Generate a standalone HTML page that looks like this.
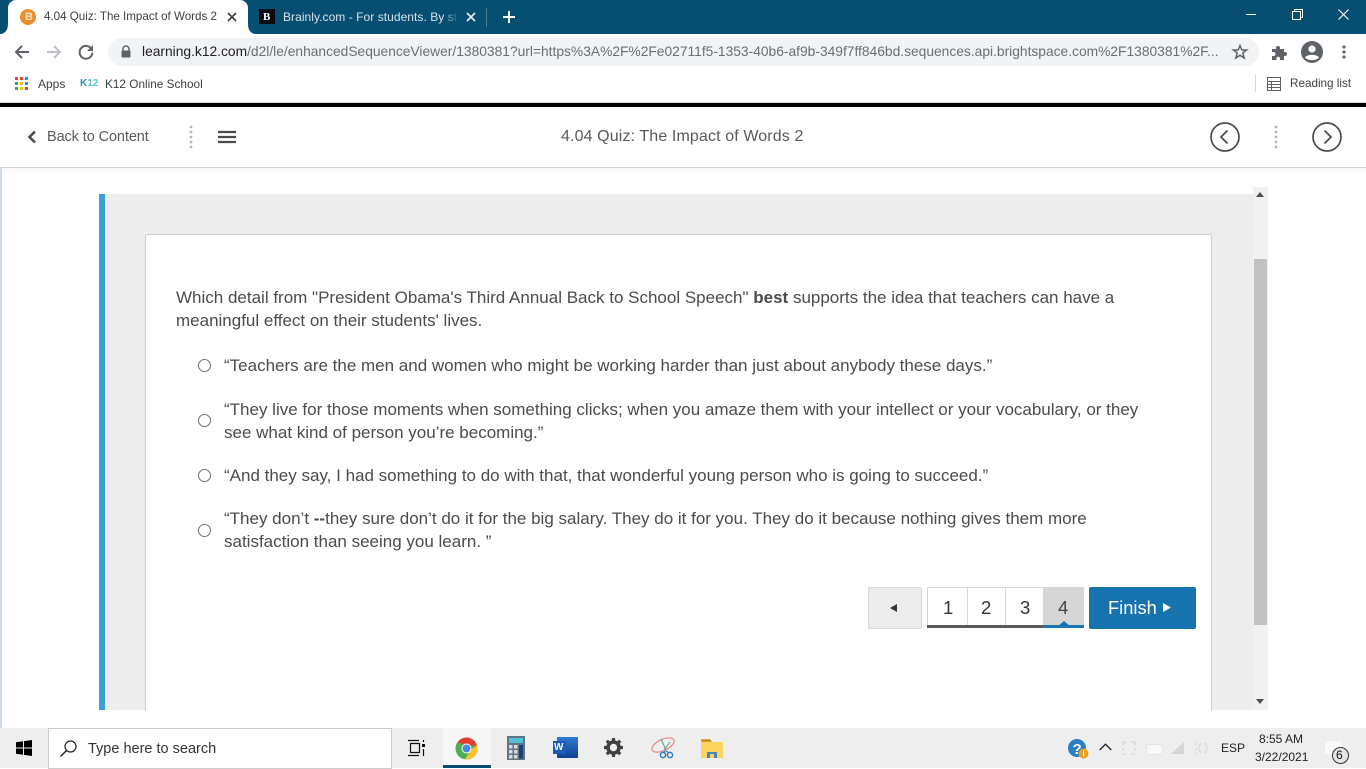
<!DOCTYPE html>
<html><head><meta charset="utf-8"><title>4.04 Quiz</title>
<style>
html,body{margin:0;padding:0;width:1366px;height:768px;overflow:hidden;background:#fff;font-family:"Liberation Sans",sans-serif}
.a{position:absolute}
.t{position:absolute;white-space:nowrap}
svg{position:absolute;overflow:visible}
.q{font-size:17px;color:#494c4e;line-height:23px}
.r{position:absolute;width:11px;height:11px;border:1px solid #6e7376;border-radius:50%;left:198px;background:#fff}
</style></head><body>
<!-- tab strip -->
<div class="a" style="left:0;top:0;width:1366px;height:34px;background:#074f72"></div>
<div class="a" style="left:8px;top:0;width:240px;height:34px;background:#fff;border-radius:8px 8px 0 0"></div>
<svg style="left:0;top:24px" width="8" height="10"><path d="M0 10H8V0C8 6 5 10 0 10Z" fill="#fff"/></svg>
<svg style="left:248px;top:24px" width="8" height="10"><path d="M0 0V10H8C3 10 0 6 0 0Z" fill="#fff"/></svg>
<div class="a" style="left:20px;top:9px;width:16px;height:16px;border-radius:50%;background:#e8912c"></div>
<div class="t" style="left:25px;top:11px;font-size:11px;font-weight:bold;color:#fbe3c4;line-height:12px">B</div>
<div class="t" style="left:44px;top:9px;font-size:11.6px;line-height:16px;color:#3c4043;letter-spacing:0">4.04 Quiz: The Impact of Words 2</div>
<svg style="left:227px;top:12px" width="10" height="10"><path d="M1 1L9 9M9 1L1 9" stroke="#3c4043" stroke-width="1.6"/></svg>
<div class="a" style="left:259px;top:9px;width:16px;height:15px;background:#0b0b0f"></div>
<div class="t" style="left:263px;top:10px;font-size:11px;font-weight:bold;font-family:'Liberation Serif',serif;color:#fff;line-height:14px">B</div>
<div class="a" style="left:283px;top:9px;width:175px;height:16px;overflow:hidden"><div class="t" style="left:0;top:0;font-size:12px;line-height:16px;color:#d5e3ea;letter-spacing:.05px">Brainly.com - For students. By students.</div></div>
<div class="a" style="left:443px;top:9px;width:16px;height:16px;background:linear-gradient(90deg,rgba(7,79,114,0),#074f72)"></div>
<svg style="left:466px;top:12px" width="10" height="10"><path d="M1 1L9 9M9 1L1 9" stroke="#e6eef2" stroke-width="1.6"/></svg>
<div class="a" style="left:486px;top:8px;width:1px;height:19px;background:#4d7d95"></div>
<svg style="left:503px;top:11px" width="12" height="12"><path d="M6 0V12M0 6H12" stroke="#fff" stroke-width="2"/></svg>
<!-- window controls -->
<div class="a" style="left:1246px;top:14px;width:10px;height:1px;background:#fff"></div>
<svg style="left:1292px;top:9px" width="11" height="11"><path d="M.5 2.500H8.500V10.500H.5ZM2.500 2.500V.5H10.500V8.500H8.500" fill="none" stroke="#fff"/></svg>
<svg style="left:1338px;top:9px" width="11" height="11"><path d="M.5 .5L10.500 10.500M10.500 .5L.5 10.500" stroke="#fff" stroke-width="1.1"/></svg>
<!-- toolbar -->
<svg style="left:14px;top:44px" width="16" height="16"><path d="M15 8H2M8 2L2 8L8 14" fill="none" stroke="#5f6368" stroke-width="2"/></svg>
<svg style="left:46px;top:44px" width="16" height="16"><path d="M1 8H14M8 2L14 8L8 14" fill="none" stroke="#bdc1c6" stroke-width="2"/></svg>
<svg style="left:78px;top:44px" width="16" height="16"><path d="M13.600 5.200A6.400 6.400 0 1 0 14.400 8.600" fill="none" stroke="#5f6368" stroke-width="2"/><path d="M15 1V7H9Z" fill="#5f6368"/></svg>
<div class="a" style="left:108px;top:38px;width:1151px;height:28px;border-radius:14px;background:#f1f3f4"></div>
<svg style="left:120px;top:45px" width="12" height="13"><path d="M3 6V4A3 3 0 0 1 9 4V6" fill="none" stroke="#5f6368" stroke-width="1.500"/><rect x="1.500" y="5.500" width="9" height="7" rx="1" fill="#5f6368"/></svg>
<div class="t" style="left:142px;top:44px;font-size:13.800px;line-height:16px;color:#6a6e72"><span style="color:#202124">learning.k12.com</span>/d2l/le/enhancedSequenceViewer/1380381?url=https%3A%2F%2Fe02711f5-1353-40b6-af9b-349f7ff846bd.sequences.api.brightspace.com%2F1380381%2F...</div>
<svg style="left:1232px;top:44px" width="16" height="16"><path d="M8 1.500L9.900 6H14.600L10.800 9L12.200 14L8 11.200L3.800 14L5.200 9L1.400 6H6.100Z" fill="none" stroke="#5f6368" stroke-width="1.500"/></svg>
<svg style="left:1272px;top:45px" width="15" height="15"><path d="M0 4H4V3A2 2 0 0 1 8 3V4H12V7H13A2 2 0 0 1 13 11H12V15H8V13.500A1.700 1.700 0 0 0 4.500 13.500V15H0V11H1.500A2 2 0 0 0 1.500 7H0Z" fill="#5f6368"/></svg>
<svg style="left:1301px;top:41px" width="22" height="22"><circle cx="11" cy="11" r="11" fill="#5f6368"/><circle cx="11" cy="8" r="3.600" fill="#fff"/><path d="M4 16.500C6 13 16 13 18 16.500C15 20 7 20 4 16.500Z" fill="#fff"/></svg>
<svg style="left:1342px;top:45px" width="4" height="14"><circle cx="2" cy="2" r="1.600" fill="#5f6368"/><circle cx="2" cy="7" r="1.600" fill="#5f6368"/><circle cx="2" cy="12" r="1.600" fill="#5f6368"/></svg>
<!-- bookmarks -->
<svg style="left:15px;top:77px" width="13" height="13"><g><rect x="0" y="0" width="3" height="3" fill="#ea4335"/><rect x="5" y="0" width="3" height="3" fill="#ea4335"/><rect x="10" y="0" width="3" height="3" fill="#4285f4"/><rect x="0" y="5" width="3" height="3" fill="#34a853"/><rect x="5" y="5" width="3" height="3" fill="#fbbc05"/><rect x="10" y="5" width="3" height="3" fill="#4285f4"/><rect x="0" y="10" width="3" height="3" fill="#34a853"/><rect x="5" y="10" width="3" height="3" fill="#fbbc05"/><rect x="10" y="10" width="3" height="3" fill="#ea4335"/></g></svg>
<div class="t" style="left:38px;top:76px;font-size:12px;line-height:16px;color:#3c4043">Apps</div>
<div class="t" style="left:80px;top:78px;font-size:10px;font-weight:bold;line-height:12px;color:#2f8fb5">K<span style="color:#5cc6d0">12</span></div>
<div class="t" style="left:105px;top:76px;font-size:11.800px;line-height:16px;color:#3c4043">K12 Online School</div>
<div class="a" style="left:1255px;top:75px;width:1px;height:17px;background:#d5d7d9"></div>
<svg style="left:1267px;top:77px" width="14" height="14"><path d="M.5 .5H13.500V13.500H.5ZM.5 4.500H13.500M.5 7.500H13.500M.5 10.500H13.500M4.500 4.500V13.500" fill="none" stroke="#5f6368"/></svg>
<div class="t" style="left:1290px;top:76px;font-size:11.700px;line-height:16px;color:#3c4043">Reading list</div>
<div class="a" style="left:0;top:102px;width:1366px;height:1px;background:#d8d8d8"></div>
<div class="a" style="left:0;top:103px;width:1366px;height:4px;background:#000"></div>
<!-- d2l nav -->
<div class="a" style="left:0;top:107px;width:1366px;height:60px;background:#fff;border-bottom:1px solid #d3d4d5;box-sizing:content-box;box-shadow:0 2px 6px rgba(0,0,0,.05)"></div>
<svg style="left:27px;top:130px" width="10" height="14"><path d="M8 1.500L2.500 7L8 12.500" fill="none" stroke="#494c4e" stroke-width="2.600"/></svg>
<div class="t" style="left:47px;top:128px;font-size:14.500px;line-height:18px;color:#565a5c;letter-spacing:-.1px">Back to Content</div>
<svg style="left:189px;top:125px" width="4" height="25"><g fill="#b5b7b9"><circle cx="2" cy="2" r="1.400"/><circle cx="2" cy="7" r="1.400"/><circle cx="2" cy="12" r="1.400"/><circle cx="2" cy="17" r="1.400"/><circle cx="2" cy="22" r="1.400"/></g></svg>
<svg style="left:218px;top:130px" width="18" height="14"><path d="M0 2H18M0 7H18M0 12H18" stroke="#494c4e" stroke-width="2.200"/></svg>
<div class="t" style="left:561px;top:127px;font-size:16px;line-height:19px;color:#565a5c;letter-spacing:.12px">4.04 Quiz: The Impact of Words 2</div>
<svg style="left:1210px;top:122px" width="30" height="30"><circle cx="15" cy="15" r="14" fill="none" stroke="#494c4e" stroke-width="1.700"/><path d="M17.500 8.500L11 15L17.500 21.500" fill="none" stroke="#494c4e" stroke-width="1.700"/></svg>
<svg style="left:1274px;top:125px" width="4" height="25"><g fill="#b5b7b9"><circle cx="2" cy="2" r="1.400"/><circle cx="2" cy="7" r="1.400"/><circle cx="2" cy="12" r="1.400"/><circle cx="2" cy="17" r="1.400"/><circle cx="2" cy="22" r="1.400"/></g></svg>
<svg style="left:1312px;top:122px" width="30" height="30"><circle cx="15" cy="15" r="14" fill="none" stroke="#494c4e" stroke-width="1.700"/><path d="M12.500 8.500L19 15L12.500 21.500" fill="none" stroke="#494c4e" stroke-width="1.700"/></svg>
<!-- left edge -->
<div class="a" style="left:0;top:168px;width:2px;height:560px;background:#cfdbe6"></div>
<!-- quiz -->
<div class="a" style="left:99px;top:194px;width:6px;height:516px;background:#3d9fd8"></div>
<div class="a" style="left:105px;top:194px;width:1148px;height:516px;background:#ededed"></div>
<div class="a" style="left:145px;top:234px;width:1065px;height:476px;background:#fff;border:1px solid #cfcfcf;border-bottom:0;border-radius:3px 3px 0 0"></div>
<div class="t q" style="left:176px;top:286px">Which detail from "President Obama's Third Annual Back to School Speech" <b>best</b> supports the idea that teachers can have a</div>
<div class="t q" style="left:176px;top:309px">meaningful effect on their students' lives.</div>
<div class="r" style="top:359px"></div>
<div class="t q" style="left:224px;top:354px">“Teachers are the men and women who might be working harder than just about anybody these days.”</div>
<div class="r" style="top:414px"></div>
<div class="t q" style="left:224px;top:398px">“They live for those moments when something clicks; when you amaze them with your intellect or your vocabulary, or they</div>
<div class="t q" style="left:224px;top:421px">see what kind of person you’re becoming.”</div>
<div class="r" style="top:469px"></div>
<div class="t q" style="left:224px;top:464px">“And they say, I had something to do with that, that wonderful young person who is going to succeed.”</div>
<div class="r" style="top:524px"></div>
<div class="t q" style="left:224px;top:507px">“They don’t <b>--</b>they sure don’t do it for the big salary. They do it for you. They do it because nothing gives them more</div>
<div class="t q" style="left:224px;top:530px">satisfaction than seeing you learn. ”</div>
<!-- pager -->
<div class="a" style="left:868px;top:587px;width:52px;height:40px;background:#ececec;border:1px solid #d9d9d9;border-radius:2px"></div>
<svg style="left:890px;top:604px" width="8" height="8"><path d="M7 0V8L0 4Z" fill="#333"/></svg>
<div class="a" style="left:927px;top:587px;width:156px;height:38px;background:#fff;border:1px solid #d5d5d5;border-bottom:0;box-sizing:border-box"></div>
<div class="a" style="left:967px;top:588px;width:1px;height:37px;background:#d8d8d8"></div>
<div class="a" style="left:1005px;top:588px;width:1px;height:37px;background:#d8d8d8"></div>
<div class="a" style="left:1043px;top:587px;width:41px;height:38px;background:#d6d6d6;border-radius:0 2px 0 0"></div>
<div class="a" style="left:927px;top:625px;width:116px;height:3px;background:#5a5a5a"></div>
<div class="a" style="left:1043px;top:625px;width:41px;height:3px;background:#1a76b0"></div>
<svg style="left:1058px;top:621px" width="12" height="5"><path d="M0 5L6 0L12 5Z" fill="#1a76b0"/></svg>
<div class="t" style="left:943px;top:597px;font-size:18.500px;line-height:22px;color:#333">1</div>
<div class="t" style="left:981px;top:597px;font-size:18.500px;line-height:22px;color:#333">2</div>
<div class="t" style="left:1020px;top:597px;font-size:18.500px;line-height:22px;color:#333">3</div>
<div class="t" style="left:1058px;top:597px;font-size:18.500px;line-height:22px;color:#444">4</div>
<div class="a" style="left:1089px;top:587px;width:107px;height:42px;background:#1673ae;border-radius:2px"></div>
<div class="t" style="left:1108px;top:597px;font-size:18.300px;line-height:22px;color:#fff">Finish</div>
<svg style="left:1163px;top:603px" width="9" height="9"><path d="M0 0V9L8 4.500Z" fill="#fff"/></svg>
<!-- scrollbar -->
<div class="a" style="left:1253px;top:187px;width:15px;height:523px;background:#f1f1f1"></div>
<div class="a" style="left:1254px;top:259px;width:13px;height:366px;background:#c1c1c1"></div>
<svg style="left:1256px;top:192px" width="8" height="5"><path d="M0 5L4 0L8 5Z" fill="#505050"/></svg>
<svg style="left:1256px;top:699px" width="8" height="5"><path d="M0 0L4 5L8 0Z" fill="#505050"/></svg>
<!-- taskbar -->
<div class="a" style="left:0;top:728px;width:1366px;height:40px;background:#eeeeee"></div>
<svg style="left:16px;top:740px" width="16" height="16"><path d="M0 2.300L7 1.300V7.500H0ZM8 1.100L16 0V7.500H8ZM0 8.500H7V14.700L0 13.700ZM8 8.500H16V16L8 14.900Z" fill="#000"/></svg>
<div class="a" style="left:48px;top:728px;width:342px;height:39px;background:#fff;border:1px solid #cdcdcd"></div>
<svg style="left:60px;top:740px" width="17" height="17"><circle cx="10.500" cy="6.500" r="5.500" fill="none" stroke="#222" stroke-width="1.200"/><path d="M6.500 10.500L.5 16.500" stroke="#222" stroke-width="1.500"/></svg>
<div class="t" style="left:88px;top:740px;font-size:14.500px;line-height:18px;color:#333">Type here to search</div>
<svg style="left:408px;top:740px" width="17" height="16"><path d="M0 .5H11M0 15.500H11M2.500 3.500H11.500V12.500H2.500Z" fill="none" stroke="#111" stroke-width="1.200"/><rect x="14" y="4" width="3" height="3" fill="#111"/><path d="M15.500 0V2M15.500 9V16" stroke="#111" stroke-width="1.200"/></svg>
<div class="a" style="left:443px;top:728px;width:48px;height:37px;background:#f7f7f7"></div>
<div class="a" style="left:443px;top:765px;width:48px;height:3px;background:#074f72"></div>
<svg style="left:455px;top:737px" width="23" height="23"><circle cx="11.500" cy="11.500" r="11" fill="#4caf50"/><path d="M11.500 .5A11 11 0 0 1 22 9L11.500 8L2.500 5.500A11 11 0 0 1 11.500 .5Z" fill="#e53e2f"/><path d="M22 8A11 11 0 0 1 10 22.500L15.500 13Z" fill="#fbc02d"/><circle cx="11.500" cy="11.500" r="5" fill="#fff"/><circle cx="11.500" cy="11.500" r="4" fill="#4a89dc"/></svg>
<svg style="left:507px;top:736px" width="18" height="24"><rect width="18" height="24" fill="#5f7481"/><rect x="2" y="2" width="14" height="5" fill="#4fc0d8"/><g fill="#d8dde0"><rect x="2" y="9" width="3.500" height="3.500"/><rect x="7" y="9" width="3.500" height="3.500"/><rect x="2" y="14" width="3.500" height="3.500"/><rect x="7" y="14" width="3.500" height="3.500"/><rect x="2" y="19" width="3.500" height="3.500"/><rect x="7" y="19" width="3.500" height="3.500"/></g><rect x="12" y="9" width="4" height="13.500" fill="#1c3f7a"/></svg>
<div class="a" style="left:557px;top:737px;width:21px;height:21px;background:linear-gradient(180deg,#2b7cd3,#103f91);border-radius:1px"></div>
<div class="a" style="left:553px;top:741px;width:13px;height:13px;background:#185abd"></div>
<div class="t" style="left:554px;top:742px;font-size:10px;font-weight:bold;line-height:11px;color:#fff">W</div>
<svg style="left:604px;top:738px" width="19" height="19"><circle cx="9.500" cy="9.500" r="5.500" fill="none" stroke="#404040" stroke-width="3.600"/><g stroke="#404040" stroke-width="3.200"><path d="M9.500 0V3M9.500 16V19M0 9.500H3M16 9.500H19M2.800 2.800L5 5M14 14L16.200 16.200M16.200 2.800L14 5M5 14L2.800 16.200"/></g></svg>
<svg style="left:651px;top:737px" width="25" height="23"><ellipse cx="12" cy="8" rx="12" ry="5.500" transform="rotate(-25 12 8)" fill="none" stroke="#e88c8c" stroke-width="1.300"/><path d="M10 2L15 13M19 5L13 13" stroke="#5a9f8f" stroke-width="1"/><circle cx="12" cy="18" r="2.600" fill="none" stroke="#2f7fc1" stroke-width="1.500"/><circle cx="19" cy="18" r="2.600" fill="none" stroke="#2f7fc1" stroke-width="1.500"/><path d="M14 14L13 16M15 14L18 16" stroke="#2f7fc1" stroke-width="1.300"/></svg>
<svg style="left:701px;top:739px" width="22" height="19"><path d="M0 0H9L11 3H22V19H0Z" fill="#e2a92c"/><rect y="3" width="22" height="16" fill="#fbd35f"/><path d="M6 19V13H16V19H13V15H9V19Z" fill="#4a87b8"/><rect x="1" y="1" width="9" height="1.500" fill="#c78a1e"/></svg>
<!-- tray -->
<svg style="left:1068px;top:739px" width="22" height="20"><circle cx="9" cy="9" r="9" fill="#2a7fc4"/><text x="4.500" y="15" font-size="15" font-weight="bold" fill="#fff" font-family="Liberation Sans, sans-serif">?</text><circle cx="15.500" cy="14.500" r="5" fill="#e8a020"/><rect x="15" y="11.500" width="1.200" height="6" fill="#fff"/></svg>
<svg style="left:1099px;top:743px" width="13" height="8"><path d="M.7 7L6.500 1.200L12.300 7" fill="none" stroke="#222" stroke-width="1.300"/></svg>
<svg style="left:1122px;top:740px" width="14" height="17"><path d="M1 2H4M9 2H13M1 2V5M13 2V5M1 8V11M13 8V11M1 14H4M9 14H13" stroke="#d5d5d5" stroke-width="1.300" fill="none"/></svg>
<div class="a" style="left:1146px;top:744px;width:15px;height:9px;background:#f8f8f8;border:1px solid #e3e3e3;border-radius:1px"></div>
<svg style="left:1171px;top:741px" width="14" height="14"><path d="M0 13L13 1V13Z" fill="#d5d5d5"/></svg>
<svg style="left:1195px;top:741px" width="14" height="14"><path d="M1 1V4M1 7V10M1 12V14M6 2L3 7L6 12M9 1L13 7L9 13" stroke="#d5d5d5" fill="none"/></svg>
<div class="t" style="left:1221px;top:741px;font-size:12px;line-height:14px;color:#222">ESP</div>
<div class="t" style="left:1259px;top:732px;font-size:12px;line-height:14px;color:#222">8:55 AM</div>
<div class="t" style="left:1255px;top:750px;font-size:12px;line-height:14px;color:#222">3/22/2021</div>
<div class="a" style="left:1325px;top:741px;width:16px;height:13px;background:#f9f9f9"></div>
<div class="a" style="left:1332px;top:747px;width:15px;height:15px;border-radius:50%;background:#e6e6e6;border:1px solid #333"></div>
<div class="t" style="left:1336px;top:748px;font-size:12px;line-height:14px;color:#111">6</div>
</body></html>
